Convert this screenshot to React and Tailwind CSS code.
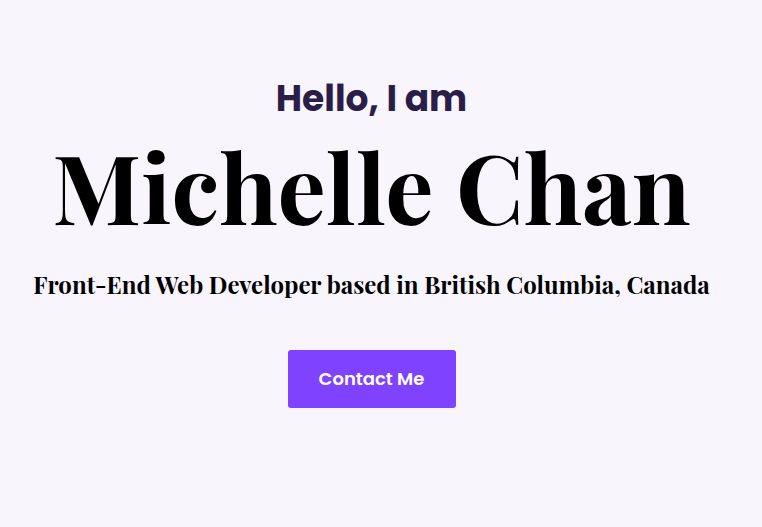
export default function App() {
  return (
    <div className="min-h-[527px] w-full bg-[#f8f5fd] flex flex-col items-center pt-[81px] pr-[19px]">
      <h2 className="text-[36px] leading-none font-bold text-[#2a1d47] font-['Poppins',Inter,sans-serif]">
        Hello, I am
      </h2>
      <h1 className="mt-[20px] text-8xl leading-none font-bold text-black font-['Playfair_Display','Liberation_Serif',serif]">
        Michelle Chan
      </h1>
      <p className="mt-[39px] text-2xl leading-none font-bold text-black font-['Playfair_Display','Liberation_Serif',serif]">
        Front-End Web Developer based in British Columbia, Canada
      </p>
      <button
        type="button"
        className="mt-[54px] w-[168px] h-[58px] rounded-[3px] bg-[#7f42ff] text-white text-lg font-semibold font-['Poppins',Inter,sans-serif]"
      >
        Contact Me
      </button>
    </div>
  )
}
